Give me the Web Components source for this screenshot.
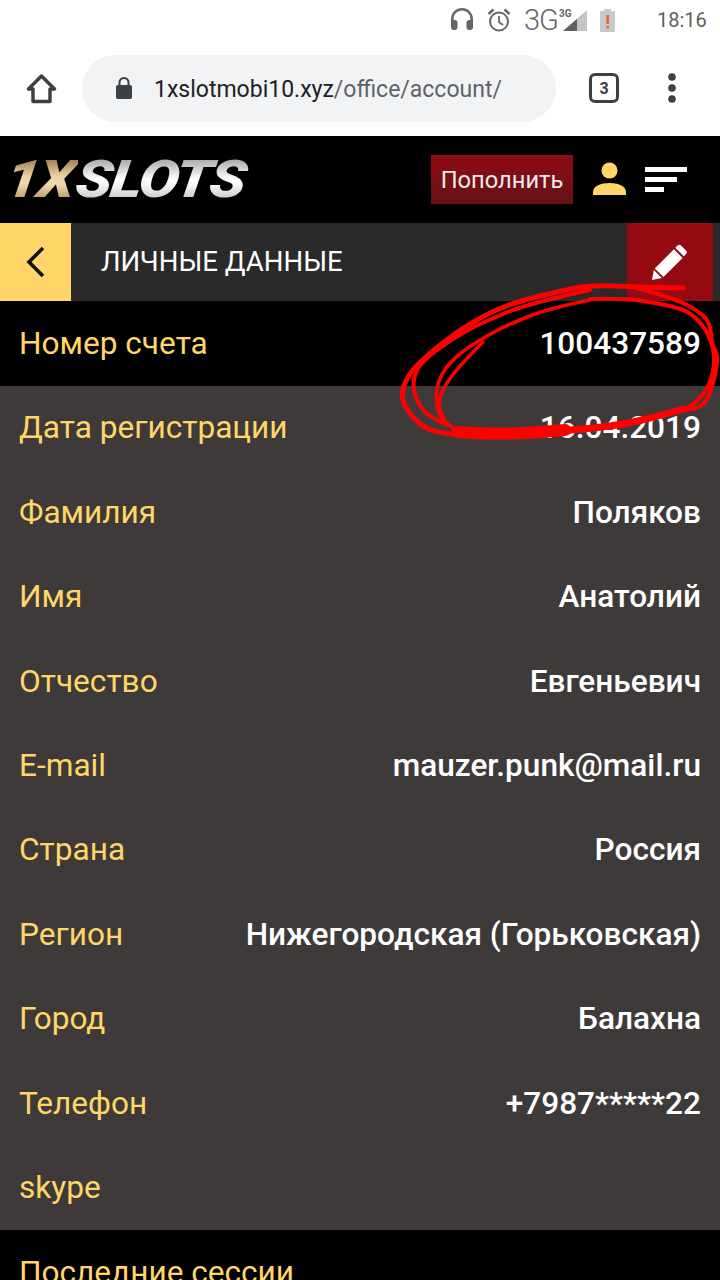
<!DOCTYPE html>
<html lang="ru">
<head>
<meta charset="utf-8">
<title>1xslots</title>
<style>
  html, body { margin: 0; padding: 0; background: #000; overflow: hidden; height: 1280px; }
  body { font-family: Roboto, "Noto Sans", sans-serif; position: relative; }
</style>
</head>
<body>
<status-bar></status-bar>
<browser-bar></browser-bar>
<site-header></site-header>
<title-bar>ЛИЧНЫЕ ДАННЫЕ</title-bar>
<info-row dark label="Номер счета">100437589</info-row>
<info-row label="Дата регистрации">16.04.2019</info-row>
<info-row label="Фамилия">Поляков</info-row>
<info-row label="Имя">Анатолий</info-row>
<info-row label="Отчество">Евгеньевич</info-row>
<info-row label="E-mail">mauzer.punk@mail.ru</info-row>
<info-row label="Страна">Россия</info-row>
<info-row label="Регион">Нижегородская (Горьковская)</info-row>
<info-row label="Город">Балахна</info-row>
<info-row label="Телефон">+7987*****22</info-row>
<info-row label="skype"></info-row>
<info-row dark label="Последние сессии"></info-row>
<red-scribble></red-scribble>

<script>
//status bar on top of the phone
class StatusBar extends HTMLElement {
  constructor(){
    super();
    this.attachShadow({mode:"open"}).innerHTML = `
    <style>
      :host { display: flex; align-items: center; height: 40px; background: #fff; color: #5c5c5c; font-family: Roboto, sans-serif; padding-left: 450px; box-sizing: border-box; }
      svg { display: block; flex: none; }
      .net { font-size: 29px; font-weight: 300; margin-left: 12px; letter-spacing: -1px; color: #666; }
      .sup { font-size: 10px; font-weight: 700; align-self: flex-start; margin: 8px 0 0 1px; color: #666; width: 0; }
      .time { font-size: 20px; margin-left: 41px; color: #5e5e5e; }
    </style>
    <svg width="24" height="24" viewBox="0 0 24 24" style="margin-top:-2px"><path fill="#666" d="M12 1C5.900 1 1 5.900 1 12v8.500C1 22 2.100 23 3.500 23H5c1.400 0 2.500-1 2.500-2.500v-5C7.500 14.100 6.400 13 5 13H3.600v-1c0-4.700 3.700-8.400 8.400-8.400s8.400 3.700 8.400 8.400v1H19c-1.400 0-2.500 1.100-2.500 2.500v5c0 1.500 1.100 2.500 2.500 2.500h1.500c1.400 0 2.500-1 2.500-2.500V12C23 5.900 18.100 1 12 1z"/></svg>
    <svg width="26" height="26" viewBox="0 0 26 26" style="margin-left:12px"><g fill="none" stroke="#666" stroke-width="2"><circle cx="13" cy="14.500" r="9"/><path d="M13 9v6l4 3" stroke-width="1.800"/><path d="M2.500 7l5-4.500M23.500 7l-5-4.500" stroke-width="2.400"/></g></svg>
    <span class="net">3G</span>
    <span class="sup">3G</span>
    <svg width="25" height="24" viewBox="0 0 25 24" style="margin-left:3px"><path fill="#c4c4c4" d="M25 2v21H1z"/><path fill="#5f5f5f" d="M15 11v12H1z"/></svg>
    <svg width="17" height="24" viewBox="0 0 17 24" style="margin-left:12px"><path fill="#c9c9c9" d="M5 1h7v2h4v21H1V3h4z"/><rect x="7.500" y="7" width="2.400" height="9" fill="#f1592a"/><rect x="7.500" y="18" width="2.400" height="2.600" fill="#f1592a"/></svg>
    <span class="time">18:16</span>`;
  }
}

//chrome toolbar with the address pill
class BrowserBar extends HTMLElement {
  constructor(){
    super();
    this.attachShadow({mode:"open"}).innerHTML = `
    <style>
      :host { display: flex; align-items: center; height: 96px; background: #fff; box-sizing: border-box; padding-left: 26px; font-family: Roboto, sans-serif; }
      svg { display: block; flex: none; }
      .pill { display: flex; align-items: center; width: 474px; height: 67px; margin-left: 25px; border-radius: 34px; background: #f1f3f4; box-sizing: border-box; padding-left: 33px; font-size: 23px; color: #202124; white-space: nowrap; }
      .pill span { margin-left: 21px; padding-top: 3px; }
      .pill i { font-style: normal; color: #5f6368; }
      .tabs { width: 30px; height: 30px; box-sizing: border-box; margin-left: 33px; border: 3.500px solid #3c4043; border-radius: 6px; font-size: 16px; font-weight: 700; color: #3c4043; display: flex; align-items: center; justify-content: center; flex: none; }
      .dots { margin-left: 48px; }
    </style>
    <svg width="31" height="31" viewBox="0 0 31 31"><path fill="none" stroke="#3c4043" stroke-width="3.500" stroke-linejoin="round" d="M15.500 3L2.500 16h4.500v12.500h17V16h4.500z"/></svg>
    <div class="pill">
      <svg width="18" height="24" viewBox="0 0 18 24"><path fill="#3c4043" d="M9 1a5.500 5.500 0 0 0-5.500 5.500V9H3a2 2 0 0 0-2 2v10a2 2 0 0 0 2 2h12a2 2 0 0 0 2-2V11a2 2 0 0 0-2-2h-.5V6.500A5.500 5.500 0 0 0 9 1zm-3.500 8V6.500a3.500 3.500 0 0 1 7 0V9z"/></svg>
      <span>1xslotmobi10.xyz<i>/office/account/</i></span>
    </div>
    <div class="tabs">3</div>
    <svg class="dots" width="10" height="30" viewBox="0 0 10 30"><g fill="#3c4043"><circle cx="5" cy="4" r="3.800"/><circle cx="5" cy="15" r="3.800"/><circle cx="5" cy="26" r="3.800"/></g></svg>`;
  }
}

//black site header, logo + top up + user + menu
class SiteHeader extends HTMLElement {
  constructor(){
    super();
    this.attachShadow({mode:"open"}).innerHTML = `
    <style>
      :host { display: flex; align-items: center; height: 87px; background: #000; box-sizing: border-box; padding: 0 33px 0 13px; }
      .logo { font: italic 900 52px/52px Roboto, sans-serif; letter-spacing: -1.500px; white-space: nowrap; transform-origin: left center; transform: translateX(-7px) skewX(-8deg) scaleX(1.16); }
      .logo b { font-weight: 900; -webkit-background-clip: text; background-clip: text; color: transparent; padding-right: 2px; }
      .gold { background-image: linear-gradient(#8f6f42 12%, #ecd3a3 45%, #f0d9ac 58%, #b08a55 88%); }
      .silver { background-image: linear-gradient(#9c9c9c 12%, #ffffff 50%, #f4f4f4 60%, #bdbdbd 88%); }
      .pay { margin-left: auto; width: 142px; height: 49px; background: linear-gradient(#900b11, #641219); color: #ececec; font: 400 23.700px Roboto, sans-serif; display: flex; align-items: center; justify-content: center; flex: none; }
      .user { display: block; margin: -2px 0 0 20px; flex: none; }
      .menu { display: flex; flex-direction: column; gap: 5px; margin-left: 19px; width: 42px; flex: none; }
      .menu i { display: block; height: 5px; background: #fff; }
    </style>
    <div class="logo"><b class="gold">1X</b><b class="silver">SLOTS</b></div>
    <div class="pay">Пополнить</div>
    <svg class="user" width="33" height="33" viewBox="0 0 33 33"><circle cx="16.500" cy="8.500" r="8" fill="#ffd667"/><path fill="#ffd667" d="M0 33v-3c0-6 8-9 16.500-9S33 24 33 30v3z"/></svg>
    <div class="menu"><i></i><i style="width:32px"></i><i style="width:19px"></i></div>`;
  }
}

//section title with back + edit
class TitleBar extends HTMLElement {
  constructor(){
    super();
    this.attachShadow({mode:"open"}).innerHTML = `
    <style>
      :host { display: flex; align-items: stretch; height: 78px; background: #2a2a2a; color: #fff; font-family: Roboto, sans-serif; }
      .back { width: 71px; background: #ffd667; display: flex; align-items: center; justify-content: center; flex: none; }
      .title { flex: 1; display: flex; align-items: center; padding: 0 0 2px 30px; font-size: 27.600px; font-weight: 400; }
      .edit { width: 86px; margin-right: 7px; background: #930b11; display: flex; align-items: center; justify-content: center; flex: none; }
      svg { display: block; }
    </style>
    <div class="back"><svg width="20" height="32" viewBox="0 0 20 32"><path d="M17 2L3 16l14 14" fill="none" stroke="#111" stroke-width="3.600"/></svg></div>
    <div class="title"><slot></slot></div>
    <div class="edit"><svg width="36" height="36" viewBox="0 0 36 36"><path fill="#fff" d="M25.500 1.500a2.500 2.500 0 0 1 3.500 0l5 5a2.500 2.500 0 0 1 0 3.500l-2.200 2.200-8.500-8.500zM21.900 5.300l8.700 8.700L11.500 33 2.800 24.400zM1.800 26l8 8L0 36z"/></svg></div>`;
  }
}

//label on the left, value on the right
class InfoRow extends HTMLElement {
  constructor(){
    super();
    this.attachShadow({mode:"open"}).innerHTML = `
    <style>
      :host { display: flex; align-items: center; justify-content: space-between; height: 84.400px; box-sizing: border-box; padding: 0 19px; background: #3e3a3a; font: 400 31.600px Roboto, sans-serif; white-space: nowrap; }
      :host([dark]) { background: #000; height: 84.800px; }
      .label { color: #ffd667; }
      .value { color: #fff; font-weight: 500; }
    </style>
    <span class="label"></span>
    <span class="value"><slot></slot></span>`;
  }
  connectedCallback(){
    this.shadowRoot.querySelector(".label").textContent = this.getAttribute("label");
  }
}

//hand drawn red circle over the page, it lies on top of everything
var scribble_strokes = [
  [5, [[683,288],[637,287],[590,285],[557,292],[523,300],[490,312],[457,332],[430,353],[410,372],[401,392],[405,408],[420,425],[435,432],[460,435]]],
  [4, [[590,290],[530,303],[483,322],[450,340],[420,363],[412,382],[417,402],[427,415],[447,425]]],
  [3.5, [[590,300],[550,308],[507,325],[483,338],[457,355],[440,375],[435,398],[440,418],[453,428]]],
  [3.5, [[483,342],[460,365],[443,388],[438,405],[445,422]]],
  [4, [[590,299],[623,298],[657,303],[687,310],[703,325],[712,342],[715,362],[710,385],[697,402],[683,410]]],
  [4, [[637,288],[673,298],[697,310],[710,322],[712,345],[718,355],[715,378],[705,407],[683,410]]],
  [12, [[458,432],[490,434],[530,433],[565,430]]],
  [7, [[560,431],[595,428],[625,424],[655,417],[684,409]]]
];

class RedScribble extends HTMLElement {
  constructor(){
    super();
    var paths = scribble_strokes.map(([w, pts]) => {
      //round the corners: quadratic curves through the midpoints
      var d = "M" + pts[0].join(" ");
      for (var i = 1; i < pts.length - 1; i++) {
        var mx = (pts[i][0] + pts[i+1][0]) / 2, my = (pts[i][1] + pts[i+1][1]) / 2;
        d += "Q" + pts[i].join(" ") + " " + mx + " " + my;
      }
      d += "L" + pts[pts.length-1].join(" ");
      return `<path stroke-width="${w}" d="${d}"/>`;
    }).join("");
    this.attachShadow({mode:"open"}).innerHTML = `
    <style>
      :host { position: absolute; left: 0; top: 0; width: 720px; height: 1280px; pointer-events: none; }
      svg { display: block; }
    </style>
    <svg width="720" height="1280" viewBox="0 0 720 1280" fill="none" stroke="#f00" stroke-linecap="round" stroke-linejoin="round">${paths}</svg>`;
  }
}

customElements.define("status-bar", StatusBar);
customElements.define("browser-bar", BrowserBar);
customElements.define("site-header", SiteHeader);
customElements.define("title-bar", TitleBar);
customElements.define("info-row", InfoRow);
customElements.define("red-scribble", RedScribble);
</script>
</body>
</html>
